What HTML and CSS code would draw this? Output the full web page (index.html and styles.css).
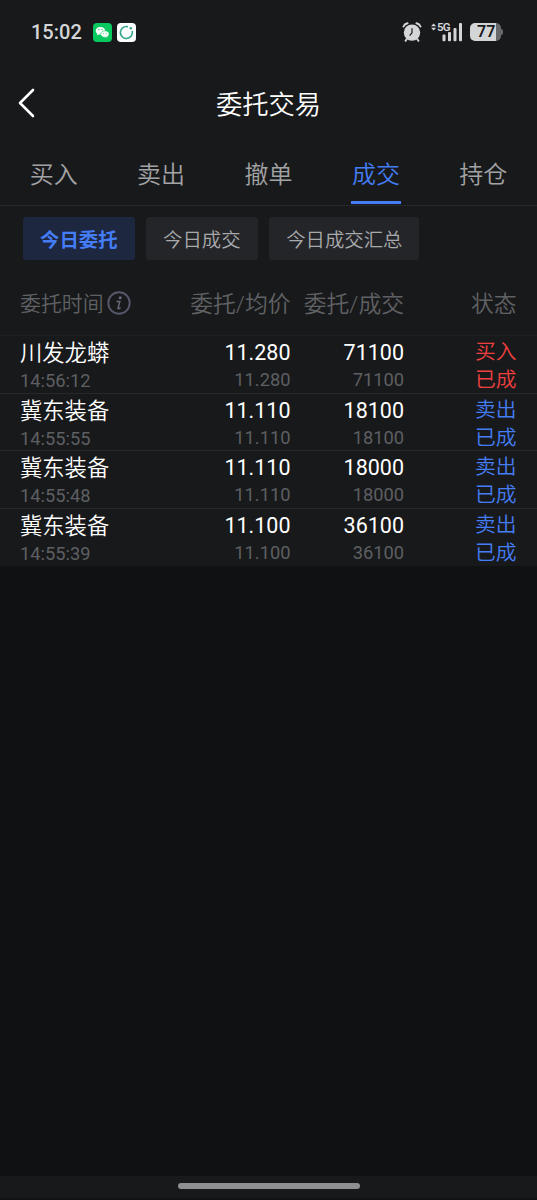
FILE: index.html
```
<!DOCTYPE html>
<html lang="zh-CN">
<head>
    <meta charset="UTF-8">
    <meta name="viewport" content="width=device-width, initial-scale=1.0">
    <title>委托交易</title>
    <link rel="stylesheet" href="styles.css">
</head>
<body>
    <div class="status-bar">
        <span class="clock">15:02</span>
        <svg class="app-icon" viewBox="0 0 19 19">
            <rect width="19" height="19" rx="4" fill="#07c95f"/>
            <path d="M7.4 4C4.600 4 2.700 5.700 2.700 7.800c0 1.200.6 2.200 1.600 2.900l-.4 1.500 1.700-.8c.6.2 1.200.2 1.800.2 2.800 0 4.800-1.700 4.800-3.800S10.200 4 7.400 4z" fill="#fff"/>
            <path d="M11.900 7.800c-2.500 0-4.200 1.500-4.200 3.300s1.700 3.300 4.200 3.300c.5 0 1-.1 1.500-.2l1.500.8-.4-1.400c1-.6 1.600-1.500 1.600-2.500 0-1.800-1.700-3.300-4.200-3.300z" fill="#fff" stroke="#07c95f" stroke-width=".6"/>
            <g fill="#07c95f"><circle cx="5.900" cy="6.600" r=".7"/><circle cx="9" cy="6.600" r=".7"/><circle cx="10.600" cy="10.300" r=".5"/><circle cx="13.200" cy="10.300" r=".5"/></g>
        </svg>
        <svg class="app-icon" viewBox="0 0 19 19">
            <rect width="19" height="19" rx="4" fill="#fff"/>
            <path d="M10.300 3.600a6 6 0 1 0 5 5" fill="none" stroke="#35a78c" stroke-width="1.700" stroke-linecap="round"/>
            <circle cx="13.800" cy="5.200" r="1.300" fill="#35a78c"/>
        </svg>
        <div class="system-icons">
            <svg class="alarm" viewBox="0 0 20 20">
                <g fill="none" stroke="#d4d5d7" stroke-width="2" stroke-linecap="round">
                    <path d="M1.500 4.500Q2.500 2 5.500 1.300M14.500 1.300Q17.500 2 18.500 4.500M4.800 17l-1.200 1.800M15.200 17l1.200 1.800"/>
                </g>
                <circle cx="10" cy="10.600" r="8.200" fill="#d4d5d7"/>
                <path d="M10 6.200v4.600l-2.300 2.700" fill="none" stroke="#18191b" stroke-width="1.200"/>
            </svg>
            <div class="signal">
                <svg viewBox="0 0 32 20">
                    <g fill="#d4d5d7">
                        <path d="M0 4.200L2.600 1.400 5.200 4.200zM0 5.800L2.600 8.600 5.200 5.800z"/>
                        <rect x="11.500" y="12.500" width="3" height="6.800" rx="1"/>
                        <rect x="17" y="10" width="3" height="9.300" rx="1"/>
                        <rect x="22.500" y="6" width="3" height="13.300" rx="1"/>
                        <rect x="28" y="1" width="3" height="18.300" rx="1"/>
                    </g>
                </svg>
                <span>5G</span>
            </div>
            <div class="battery"><span>77</span></div>
        </div>
    </div>

    <header class="header">
        <svg class="back" viewBox="0 0 18 30">
            <path d="M15 2L2 15l13 13" fill="none" stroke="#fff" stroke-width="2.600" stroke-linecap="round" stroke-linejoin="round"/>
        </svg>
        <h1>委托交易</h1>
    </header>

    <nav class="tabs">
        <a>买入</a>
        <a>卖出</a>
        <a>撤单</a>
        <a class="active">成交</a>
        <a>持仓</a>
    </nav>

    <div class="filters">
        <button class="active">今日委托</button>
        <button>今日成交</button>
        <button>今日成交汇总</button>
    </div>

    <section class="orders">
        <div class="row table-head">
            <div class="time-head">委托时间<svg viewBox="0 0 24 24">
                <circle cx="12" cy="12" r="10.700" fill="none" stroke="#55596b" stroke-width="1.900"/>
                <circle cx="13.200" cy="6.700" r="1.500" fill="#676a78"/>
                <path d="M9.500 10.600h3.300l-1.800 6.700q-.2 1 2.600-.7" fill="none" stroke="#676a78" stroke-width="1.500"/>
            </svg></div>
            <div>委托/均价</div>
            <div>委托/成交</div>
            <div>状态</div>
        </div>
        <div class="row order buy">
            <div><b>川发龙蟒</b><small>14:56:12</small></div>
            <div><b>11.280</b><small>11.280</small></div>
            <div><b>71100</b><small>71100</small></div>
            <div class="state">买入<br>已成</div>
        </div>
        <div class="row order">
            <div><b>冀东装备</b><small>14:55:55</small></div>
            <div><b>11.110</b><small>11.110</small></div>
            <div><b>18100</b><small>18100</small></div>
            <div class="state">卖出<br>已成</div>
        </div>
        <div class="row order">
            <div><b>冀东装备</b><small>14:55:48</small></div>
            <div><b>11.110</b><small>11.110</small></div>
            <div><b>18000</b><small>18000</small></div>
            <div class="state">卖出<br>已成</div>
        </div>
        <div class="row order">
            <div><b>冀东装备</b><small>14:55:39</small></div>
            <div><b>11.100</b><small>11.100</small></div>
            <div><b>36100</b><small>36100</small></div>
            <div class="state">卖出<br>已成</div>
        </div>
    </section>

    <footer class="home-bar"><span></span></footer>
</body>
</html>
```
FILE: styles.css
```
* {
    margin: 0;
    padding: 0;
    box-sizing: border-box;
}

body {
    height: 1200px;
    display: flex;
    flex-direction: column;
    overflow: hidden;
    background: #101113;
    color: #fff;
    font-family: Roboto, 'Noto Sans CJK SC', sans-serif;
    font-weight: 350;
}

.status-bar,
.header,
.tabs,
.filters,
.orders {
    background: #18191b;
}

.status-bar {
    height: 65px;
    display: flex;
    align-items: center;
    padding: 0 36px 0 31px;
}

.clock {
    width: 62px;
    margin-top: -1px;
    font-size: 20px;
    font-weight: 500;
    color: #d4d5d7;
}

.app-icon {
    width: 19px;
    height: 19px;
    margin-right: 5px;
}

.system-icons {
    display: flex;
    align-items: center;
    margin: -1px 0 0 auto;
}

.alarm {
    width: 20px;
    height: 20px;
    margin-right: 9px;
}

.signal {
    position: relative;
    width: 32px;
    height: 20px;
    margin-right: 7px;
}

.signal svg {
    display: block;
}

.signal span {
    position: absolute;
    top: 0;
    left: 6px;
    font-size: 11.500px;
    line-height: 10px;
    letter-spacing: -0.800px;
    font-weight: 600;
    color: #d4d5d7;
}

.battery {
    position: relative;
    width: 31px;
    height: 18px;
    border-radius: 5px;
    background: linear-gradient(to right, #d4d5d7 26px, #68696b 26px);
    color: #18191b;
    font-size: 16px;
    line-height: 18px;
    font-weight: 600;
    padding-left: 7px;
}

.battery::after {
    content: "";
    position: absolute;
    top: 6px;
    right: -2px;
    width: 2px;
    height: 6px;
    border-radius: 0 2px 2px 0;
    background: #68696b;
}

.header {
    position: relative;
    height: 80px;
    display: flex;
    align-items: center;
    justify-content: center;
}

.header h1 {
    font-size: 26.300px;
    line-height: 40px;
    font-weight: 350;
}

.back {
    position: absolute;
    left: 18px;
    top: 23px;
    width: 18px;
    height: 30px;
}

.tabs {
    height: 61px;
    display: flex;
    border-bottom: 1px solid #27282a;
}

.tabs a {
    position: relative;
    flex: 1;
    text-align: center;
    font-size: 24px;
    line-height: 61px;
    color: #a2a3a5;
}

.tabs .active {
    color: #447df5;
}

.tabs .active::after {
    content: "";
    position: absolute;
    left: 50%;
    bottom: 1px;
    width: 50px;
    height: 3px;
    margin-left: -25px;
    background: #447df5;
}

.filters {
    height: 65px;
    display: flex;
    gap: 11.500px;
    padding: 11px 23px 0;
}

.filters button {
    height: 43px;
    padding: 0 17px;
    border: none;
    border-radius: 3px;
    background: #242528;
    color: #a8a9ab;
    font-family: inherit;
    font-size: 19.400px;
    font-weight: 350;
}

.filters .active {
    background: #1d2740;
    color: #447df5;
    font-weight: 700;
}

.row {
    display: grid;
    grid-template-columns: 130px 140.500px 113.500px 1fr;
    padding: 0 20.500px 0 20px;
    text-align: right;
}

.row > :first-child {
    text-align: left;
}

.table-head {
    height: 64px;
    font-size: 22.800px;
    line-height: 68px;
    color: #606164;
    white-space: nowrap;
}

.time-head {
    height: 66px;
    display: flex;
    align-items: center;
    gap: 3px;
    font-size: 20.900px;
}

.time-head svg {
    width: 24px;
    height: 24px;
    margin-top: -2px;
}

.order {
    height: 57.700px;
    border-top: 1px solid #27282a;
}

.table-head + .order {
    border-top-color: #1f2022;
}

.order b,
.order small {
    display: block;
    font-size: 21.500px;
    line-height: 32px;
    font-weight: 400;
    padding-top: 1px;
}

.order b {
    height: 31px;
}

.order > :first-child b {
    font-size: 22.300px;
    font-weight: 350;
}

.order small {
    font-size: 18.300px;
    line-height: 24px;
    padding-top: 1px;
    color: #5e5f62;
}

.order > :first-child small {
    padding-top: 2px;
}

.state {
    padding-top: 2px;
    font-size: 20.800px;
    line-height: 28px;
    color: #447df5;
}

.buy .state {
    color: #f0403f;
}

.home-bar {
    height: 24px;
    margin-top: auto;
    padding-top: 7px;
    background: #18191b;
    border-bottom: 2px solid #101113;
}

.home-bar span {
    display: block;
    width: 182px;
    height: 6px;
    margin: 0 auto;
    border-radius: 3px;
    background: #8e8f92;
}
```
